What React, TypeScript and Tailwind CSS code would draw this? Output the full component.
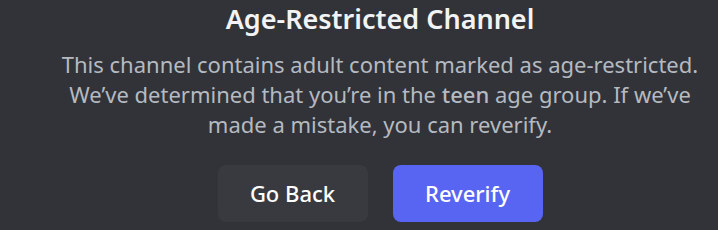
export default function App() {
  return (
    <div className="w-[718px] h-[230px] overflow-hidden bg-[#313338]" style={{ fontFamily: '"Noto Sans", sans-serif' }}>
      <div className="w-[760px] flex flex-col items-center">
        <h1 className="mt-[1px] text-[27px] leading-[36px] font-semibold text-[#f2f3f5]">Age-Restricted Channel</h1>
        <p className="mt-[12px] text-[22px] leading-[30px] text-[#b5bac1] text-center">
          This channel contains adult content marked as age-restricted.
          <br />
          We’ve determined that you’re in the <span className="font-medium">teen</span> age group. If we’ve
          <br />
          made a mistake, you can reverify.
        </p>
        <div className="mt-[26px] flex gap-[25px]">
          <button className="w-[150px] h-[57px] rounded-[8px] bg-[#393a40] text-white text-[22px] font-medium">Go Back</button>
          <button className="w-[150px] h-[57px] rounded-[8px] bg-[#5865f2] text-white text-[22px] font-medium">Reverify</button>
        </div>
      </div>
    </div>
  );
}
